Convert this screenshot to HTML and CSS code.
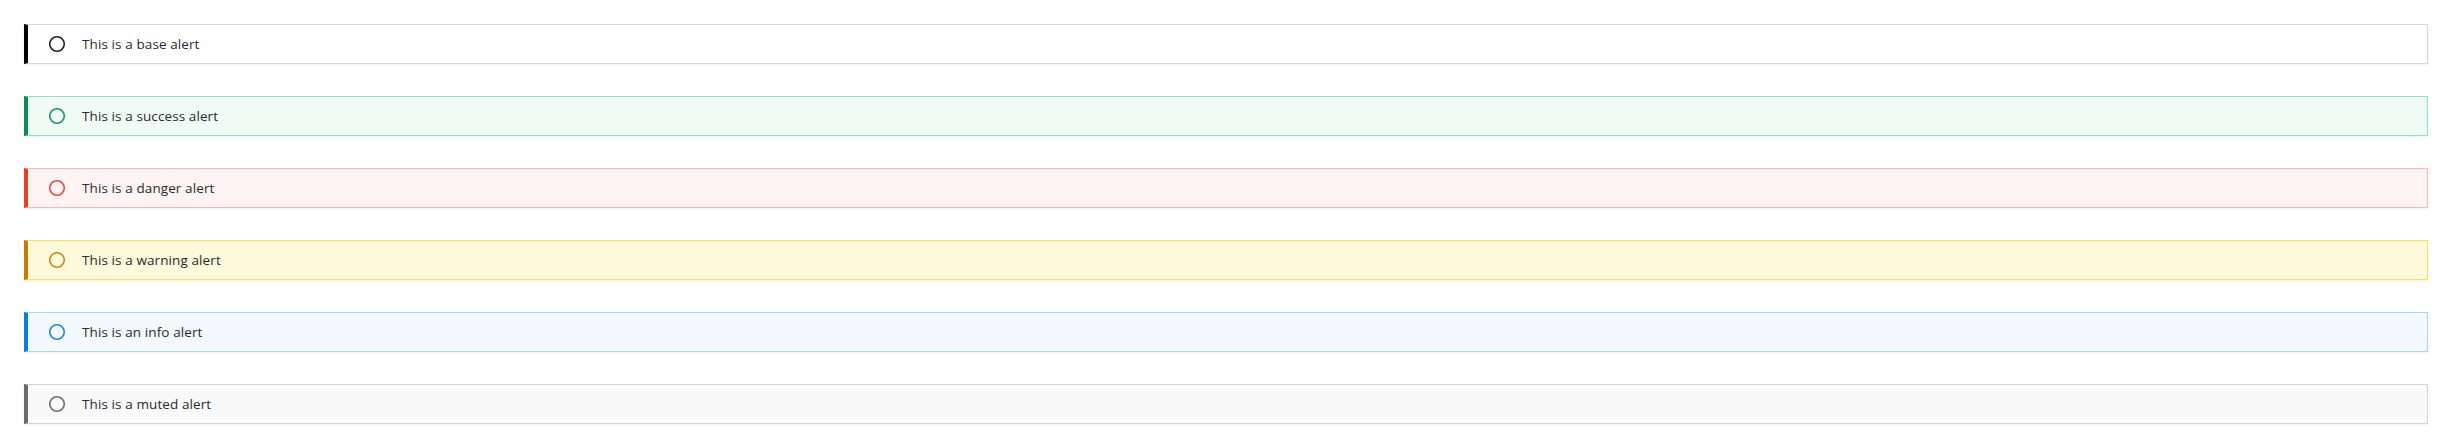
FILE: index.html
```html
<!DOCTYPE html>
<html lang="en">
<head>
<meta charset="utf-8">
<title>Alerts</title>
<link rel="stylesheet" href="styles.css">
</head>
<body>
<div class="stack">
  <div class="alert alert-base">
    <svg class="icon" viewBox="0 0 18 18" width="18" height="18"><circle cx="9" cy="9" r="7.25" fill="none" stroke="currentColor" stroke-width="1.6"/></svg>
    <span class="text">This is a base alert</span>
  </div>
  <div class="alert alert-success">
    <svg class="icon" viewBox="0 0 18 18" width="18" height="18"><circle cx="9" cy="9" r="7.25" fill="none" stroke="currentColor" stroke-width="1.6"/></svg>
    <span class="text">This is a success alert</span>
  </div>
  <div class="alert alert-danger">
    <svg class="icon" viewBox="0 0 18 18" width="18" height="18"><circle cx="9" cy="9" r="7.25" fill="none" stroke="currentColor" stroke-width="1.6"/></svg>
    <span class="text">This is a danger alert</span>
  </div>
  <div class="alert alert-warning">
    <svg class="icon" viewBox="0 0 18 18" width="18" height="18"><circle cx="9" cy="9" r="7.25" fill="none" stroke="currentColor" stroke-width="1.6"/></svg>
    <span class="text">This is a warning alert</span>
  </div>
  <div class="alert alert-info">
    <svg class="icon" viewBox="0 0 18 18" width="18" height="18"><circle cx="9" cy="9" r="7.25" fill="none" stroke="currentColor" stroke-width="1.6"/></svg>
    <span class="text">This is an info alert</span>
  </div>
  <div class="alert alert-muted">
    <svg class="icon" viewBox="0 0 18 18" width="18" height="18"><circle cx="9" cy="9" r="7.25" fill="none" stroke="currentColor" stroke-width="1.6"/></svg>
    <span class="text">This is a muted alert</span>
  </div>
</div>
</body>
</html>
```

FILE: styles.css
```css
html, body {
  margin: 0;
  padding: 0;
  background: #ffffff;
}

body {
  padding: 24px;
  font-family: "Open Sans", "Noto Sans", sans-serif;
  color: #2a2a2a;
}

.stack {
  display: flex;
  flex-direction: column;
  gap: 32px;
}

.alert {
  box-sizing: border-box;
  height: 40px;
  display: flex;
  align-items: center;
  gap: 16px;
  padding-left: 20px;
  border: 1px solid #d6d6d6;
  border-left: 4px solid #000000;
  background: #ffffff;
  box-shadow: 0 1px 2px rgba(0, 0, 0, 0.08);
}

.icon {
  flex: none;
  display: block;
  color: #222222;
}

.text {
  font-size: 13.5px;
  line-height: 18px;
  letter-spacing: 0.1px;
}

.alert-success {
  background: #effcf6;
  border-color: #90e4c0;
  border-left-color: #0d8a55;
}
.alert-success .icon { color: #179a63; }

.alert-danger {
  background: #fff4f3;
  border-color: #ffb9b1;
  border-left-color: #ea3f28;
}
.alert-danger .icon { color: #ef4934; }

.alert-warning {
  background: #fef9db;
  border-color: #fadc60;
  border-left-color: #c77b04;
}
.alert-warning .icon { color: #cd8a17; }

.alert-info {
  background: #f3f8fc;
  border-color: #a5d8f8;
  border-left-color: #0a7ee0;
}
.alert-info .icon { color: #1a88e4; }

.alert-muted {
  background: #f9f9f9;
  border-color: #d3d3d3;
  border-left-color: #6b6b6b;
}
.alert-muted .icon { color: #6f6f6f; }
```
